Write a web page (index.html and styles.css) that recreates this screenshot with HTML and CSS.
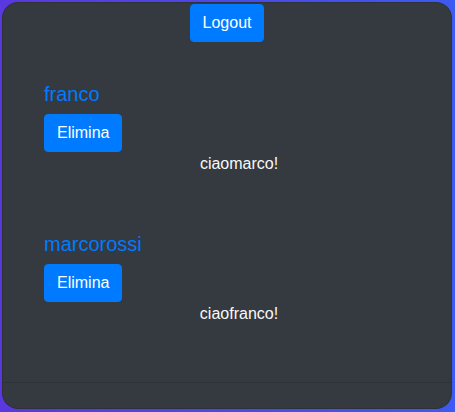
FILE: index.html
```html
<!DOCTYPE html>
<html lang="it">
<head>
<meta charset="utf-8">
<title>Messaggi</title>
<link rel="stylesheet" href="styles.css">
</head>
<body>
<div class="page">
  <div class="card">
    <div class="card-header">
      <button class="btn">Logout</button>
    </div>
    <div class="card-body">
      <div class="post">
        <h5 class="post-title">franco</h5>
        <button class="btn">Elimina</button>
        <p class="post-text">ciaomarco!</p>
      </div>
      <div class="post">
        <h5 class="post-title">marcorossi</h5>
        <button class="btn">Elimina</button>
        <p class="post-text">ciaofranco!</p>
      </div>
    </div>
    <div class="card-footer"></div>
  </div>
</div>
</body>
</html>
```

FILE: styles.css
```css
* { box-sizing: border-box; }

html, body {
  margin: 0;
  height: 100%;
}

body {
  font-family: "Liberation Sans", Arial, sans-serif;
  font-size: 16px;
  line-height: 24px;
  background: linear-gradient(to right, #5a38df, #3d5af1);
}

.page {
  height: 412px;
  padding: 2px 3px 3px 2px;
}

.card {
  height: 100%;
  display: flex;
  flex-direction: column;
  background: #343a40;
  border: 1px solid rgba(0, 0, 0, 0.125);
  border-radius: 16px;
  overflow: hidden;
}

.card-header {
  display: flex;
  justify-content: center;
  padding-top: 1px;
}

.btn {
  font-family: inherit;
  font-size: 16px;
  line-height: 24px;
  padding: 6px 12px;
  color: #fff;
  background: #007bff;
  border: 1px solid #007bff;
  border-radius: 4px;
  cursor: pointer;
}

.card-body {
  flex: 1;
  display: flex;
  flex-direction: column;
  gap: 56px;
  padding: 40px 17px 0 41px;
}

.post {
  display: flex;
  flex-direction: column;
  align-items: flex-start;
}

.post-title {
  margin: 0 0 8px;
  font-size: 20px;
  line-height: 24px;
  font-weight: 400;
  color: #007bff;
}

.post-text {
  align-self: stretch;
  margin: 0;
  text-align: center;
  color: #f8f9fa;
}

.card-footer {
  height: 26px;
  border-top: 1px solid rgba(0, 0, 0, 0.125);
}
```
